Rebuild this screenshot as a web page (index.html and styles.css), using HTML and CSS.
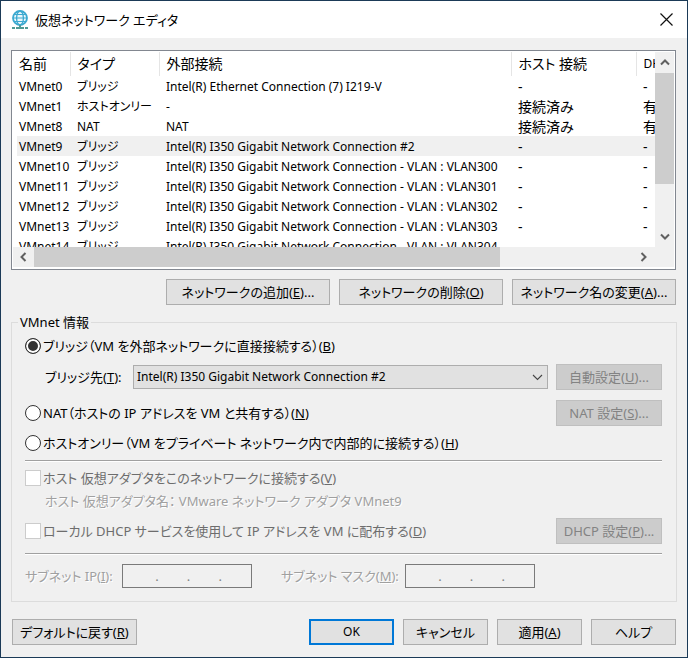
FILE: index.html
```html
<!DOCTYPE html>
<html lang="ja">
<head>
<meta charset="utf-8">
<title>仮想ネットワーク エディタ</title>
<link rel="stylesheet" href="styles.css">
</head>
<body>
<div class="window">
  <header class="titlebar">
    <svg class="app-icon" viewBox="0 0 18 20" width="18" height="20" fill="none" aria-hidden="true">
      <circle cx="9" cy="8" r="7" fill="#e9f6fb" stroke="#3ba9d0" stroke-width="1.8"/>
      <ellipse cx="9" cy="8" rx="3.4" ry="7" stroke="#3ba9d0" stroke-width="1.3"/>
      <path d="M2 8h14M3.2 4.500h11.600M3.2 11.500h11.600" stroke="#3ba9d0" stroke-width="1.2"/>
      <path d="M9 15v2M1 18h3M5 18h8M14 18h3" stroke="#4f9a94" stroke-width="2"/>
    </svg>
    <h1 class="title">仮想ネットワーク エディタ</h1>
    <button class="close" type="button" aria-label="閉じる">
      <svg viewBox="0 0 13 13" width="13" height="13" aria-hidden="true"><path d="M.5.5l12 12M12.500.5l-12 12" stroke="#111" stroke-width="1.2"/></svg>
    </button>
  </header>

  <main class="content">
    <div class="list">
      <div class="viewport">
        <table class="nets">
          <colgroup><col class="c-name"><col class="c-type"><col class="c-ext"><col class="c-host"><col class="c-dhcp"></colgroup>
          <thead><tr><th>名前</th><th>タイプ</th><th>外部接続</th><th>ホスト 接続</th><th class="latin">DHCP</th></tr></thead>
          <tbody>
            <tr><td>VMnet0</td><td>ブリッジ</td><td>Intel(R) Ethernet Connection (7) I219-V</td><td>-</td><td>-</td></tr>
            <tr><td>VMnet1</td><td>ホストオンリー</td><td>-</td><td>接続済み</td><td>有効</td></tr>
            <tr><td>VMnet8</td><td>NAT</td><td>NAT</td><td>接続済み</td><td>有効</td></tr>
            <tr class="selected"><td>VMnet9</td><td>ブリッジ</td><td>Intel(R) I350 Gigabit Network Connection #2</td><td>-</td><td>-</td></tr>
            <tr><td>VMnet10</td><td>ブリッジ</td><td>Intel(R) I350 Gigabit Network Connection - VLAN : VLAN300</td><td>-</td><td>-</td></tr>
            <tr><td>VMnet11</td><td>ブリッジ</td><td>Intel(R) I350 Gigabit Network Connection - VLAN : VLAN301</td><td>-</td><td>-</td></tr>
            <tr><td>VMnet12</td><td>ブリッジ</td><td>Intel(R) I350 Gigabit Network Connection - VLAN : VLAN302</td><td>-</td><td>-</td></tr>
            <tr><td>VMnet13</td><td>ブリッジ</td><td>Intel(R) I350 Gigabit Network Connection - VLAN : VLAN303</td><td>-</td><td>-</td></tr>
            <tr><td>VMnet14</td><td>ブリッジ</td><td>Intel(R) I350 Gigabit Network Connection - VLAN : VLAN304</td><td>-</td><td>-</td></tr>
          </tbody>
        </table>
      </div>
      <div class="vbar">
        <button class="arrow" type="button" aria-label="上へ"><svg viewBox="0 0 10 7" width="10" height="7"><path d="M1 5.500l4-4 4 4" fill="none" stroke="#606060" stroke-width="2"/></svg></button>
        <div class="vthumb"></div>
        <button class="arrow end" type="button" aria-label="下へ"><svg viewBox="0 0 10 7" width="10" height="7"><path d="M1 1.500l4 4 4-4" fill="none" stroke="#606060" stroke-width="2"/></svg></button>
      </div>
      <div class="hbar">
        <button class="arrow" type="button" aria-label="左へ"><svg viewBox="0 0 7 10" width="7" height="10"><path d="M5.500 1l-4 4 4 4" fill="none" stroke="#606060" stroke-width="2"/></svg></button>
        <div class="hthumb"></div>
        <button class="arrow end" type="button" aria-label="右へ"><svg viewBox="0 0 7 10" width="7" height="10"><path d="M1.500 1l4 4-4 4" fill="none" stroke="#606060" stroke-width="2"/></svg></button>
      </div>
    </div>

    <div class="actions">
      <button class="btn wide" type="button">ネットワークの追加(<u>E</u>)...</button>
      <button class="btn wide" type="button">ネットワークの削除(<u>O</u>)</button>
      <button class="btn wide" type="button">ネットワーク名の変更(<u>A</u>)...</button>
    </div>

    <fieldset class="info">
      <legend>VMnet 情報</legend>
      <div class="row">
        <input type="radio" name="mode" id="m-bridge" checked>
        <label for="m-bridge">ブリッジ（VM を外部ネットワークに直接接続する）(<u>B</u>)</label>
      </div>
      <div class="row bridge">
        <label class="bridge-label" for="bridge-to">ブリッジ先(<u>T</u>):</label>
        <span class="combo">
          <select id="bridge-to"><option>Intel(R) I350 Gigabit Network Connection #2</option></select>
          <svg viewBox="0 0 11 7" width="11" height="7" aria-hidden="true"><path d="M1 1l4.500 4.500L10 1" fill="none" stroke="#444" stroke-width="1.1"/></svg>
        </span>
        <button class="btn side" type="button" disabled>自動設定(<u>U</u>)...</button>
      </div>
      <div class="row nat">
        <input type="radio" name="mode" id="m-nat">
        <label for="m-nat">NAT（ホストの IP アドレスを VM と共有する）(<u>N</u>)</label>
        <button class="btn side" type="button" disabled>NAT 設定(<u>S</u>)...</button>
      </div>
      <div class="row host">
        <input type="radio" name="mode" id="m-host">
        <label for="m-host">ホストオンリー（VM をプライベート ネットワーク内で内部的に接続する）(<u>H</u>)</label>
      </div>
      <hr>
      <div class="row adapter">
        <input type="checkbox" id="use-adapter" disabled>
        <label class="dim" for="use-adapter">ホスト 仮想アダプタをこのネットワークに接続する(<u>V</u>)</label>
      </div>
      <p class="adapter-name etched">ホスト 仮想アダプタ名： VMware ネットワーク アダプタ VMnet9</p>
      <div class="row dhcp">
        <input type="checkbox" id="use-dhcp" disabled>
        <label class="dim" for="use-dhcp">ローカル DHCP サービスを使用して IP アドレスを VM に配布する(<u>D</u>)</label>
        <button class="btn side" type="button" disabled>DHCP 設定(<u>P</u>)...</button>
      </div>
      <hr>
      <div class="row subnet">
        <label class="etched ip-label" for="ip1">サブネット IP(<u>I</u>):</label>
        <span class="ip"><input id="ip1" disabled><i>.</i><input aria-label="IP 2" disabled><i>.</i><input aria-label="IP 3" disabled><i>.</i><input aria-label="IP 4" disabled></span>
        <label class="etched mask-label" for="mask1">サブネット マスク(<u>M</u>):</label>
        <span class="ip"><input id="mask1" disabled><i>.</i><input aria-label="マスク 2" disabled><i>.</i><input aria-label="マスク 3" disabled><i>.</i><input aria-label="マスク 4" disabled></span>
      </div>
    </fieldset>

    <footer class="footer">
      <button class="btn restore" type="button">デフォルトに戻す(<u>R</u>)</button>
      <button class="btn std default" type="submit">OK</button>
      <button class="btn std" type="button">キャンセル</button>
      <button class="btn std" type="button">適用(<u>A</u>)</button>
      <button class="btn std" type="button">ヘルプ</button>
    </footer>
  </main>
</div>
</body>
</html>
```
FILE: styles.css
```css
* { box-sizing: border-box; }
body {
  margin: 0;
  font-family: "Noto Sans", "Noto Sans CJK JP", sans-serif;
  font-size: 13px;
  line-height: 20px;
  font-feature-settings: "palt";
  color: #000;
}
button, input, select { font: inherit; font-feature-settings: inherit; color: inherit; margin: 0; }
u { text-underline-offset: 1px; }

.window {
  min-height: 100vh;
  display: flex;
  flex-direction: column;
  border: 1px solid #1b3a57;
  background: #f0f0f0;
}
.titlebar {
  display: flex;
  align-items: center;
  height: 37px;
  padding: 0 14px 0 10px;
  background: #fff;
}
.title { margin: 0 auto 0 6px; font-size: 13px; font-weight: 400; }
.close { display: flex; padding: 0; border: 0; background: none; }

.content { display: flex; flex-direction: column; padding: 12px 11px 12px 10px; }

.list {
  display: grid;
  grid-template-columns: 1fr 19px;
  grid-template-rows: 195px 20px;
  padding: 1px 1px 2px;
  border: 1px solid #828790;
  background: #fff;
}
.viewport { overflow: hidden; padding-left: 4px; }
.nets { table-layout: fixed; width: 700px; border-collapse: collapse; white-space: nowrap; }
.c-name { width: 53px; }
.c-type { width: 89px; }
.c-ext { width: 352px; }
.c-host { width: 125px; }
.nets th, .nets td { padding: 0 0 0 7px; text-align: left; font-weight: 400; overflow: hidden; }
.nets th:first-child, .nets td:first-child { padding-left: 2px; }
.nets th { height: 24px; border-right: 1px solid #e5e5e5; font-size: 14px; }
.nets th.latin { font-size: 12px; }
.nets td { height: 20px; padding-top: 1px; font-size: 12px; line-height: 19px; }
.nets td:nth-child(n+4) { font-size: 14px; }
.selected { background: #f0f0f0; }

.vbar { display: flex; flex-direction: column; background: #f0f0f0; }
.hbar { display: flex; grid-column: 1 / 3; background: #f0f0f0; }
.arrow {
  display: flex;
  align-items: center;
  justify-content: center;
  width: 19px;
  height: 20px;
  padding: 0;
  border: 0;
  background: none;
}
.vbar .arrow { height: 21px; }
.hbar .arrow { width: 21px; }
.vthumb { height: 111px; background: #cdcdcd; }
.hthumb { width: 466px; background: #cdcdcd; }
.vbar .end { margin-top: auto; }
.hbar .end { margin: 0 20px 0 auto; }

.btn {
  height: 26px;
  padding: 0;
  border: 1px solid #adadad;
  background: #e1e1e1;
  white-space: nowrap;
  line-height: 22px;
}
.btn:disabled { border-color: #bfbfbf; background: #ccc; color: #838383; }
.wide { width: 164px; }
.side { width: 106px; margin-left: auto; }
.std { width: 85px; }
.restore { width: 125px; margin-right: auto; }
.default { border: 2px solid #0078d7; font-size: 12px; }

.actions { display: flex; justify-content: flex-end; gap: 9px; margin-top: 9px; }

.info { min-width: 0; margin: 7px -1px 0 0; padding: 1px 14px 12px 13px; border: 1px solid #dcdcdc; }
.info legend { margin-left: -7px; padding: 0 2px; }
.row { display: flex; align-items: center; height: 26px; white-space: nowrap; }
.row input[type="radio"], .row input[type="checkbox"] {
  appearance: none;
  width: 16px;
  height: 16px;
  margin-right: 2px;
  border: 1px solid #333;
  background: #fff;
}
.row input[type="radio"] { border-radius: 50%; }
.row input[type="radio"]:checked { background: #333; box-shadow: inset 0 0 0 2px #fff; }
.row input[type="checkbox"] { border-color: #ccc; }
.bridge { margin-top: 5px; }
.bridge-label { width: 88px; margin-left: 20px; }
.combo { display: grid; flex: 1; margin-right: 8px; align-items: center; }
.combo select {
  grid-area: 1 / 1;
  appearance: none;
  width: 100%;
  height: 24px;
  padding: 0 24px 0 3px;
  border: 1px solid #adadad;
  border-radius: 0;
  background: #e1e1e1;
  font-size: 12px;
}
.combo svg { grid-area: 1 / 1; justify-self: end; margin-right: 5px; pointer-events: none; }
.nat { margin-top: 10px; }
.host { margin-top: 4px; }
hr { height: 2px; margin: 4px 0 3px; border: 0; border-top: 1px solid #a0a0a0; background: #fff; }
.dim { color: #6d6d6d; }
.etched { color: #a0a0a0; text-shadow: 1px 1px 0 #fff; }
.adapter-name { margin: 0 0 7px 20px; }
.dhcp { margin-bottom: 9px; }
.subnet { margin-top: 8px; }
.ip-label { width: 97px; }
.mask-label { width: 124px; margin-left: 29px; }
.ip { display: flex; align-items: center; width: 130px; height: 24px; padding: 0 1px 0 4px; border: 1px solid #7a7a7a; }
.ip input { flex: 1; min-width: 0; padding: 0; border: 0; background: none; }
.ip i { font-style: normal; color: #838383; }

.footer { display: flex; gap: 9px; margin-top: 17px; padding-left: 1px; }
```
